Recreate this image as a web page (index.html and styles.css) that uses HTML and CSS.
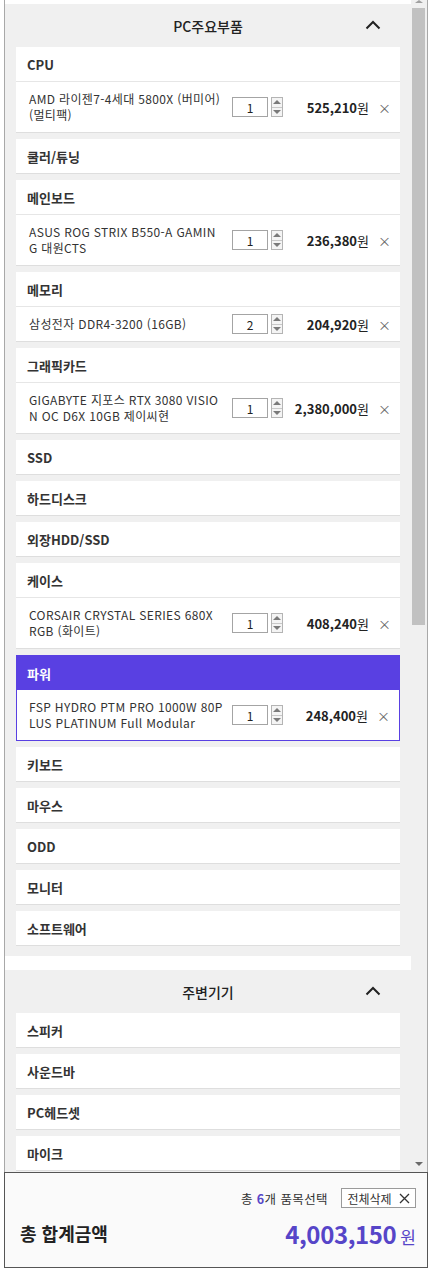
FILE: index.html
```html
<!DOCTYPE html>
<html lang="ko">
<head>
<meta charset="utf-8">
<title>견적 목록</title>
<link rel="stylesheet" href="styles.css">
</head>
<body>
<div class="widget">
  <div class="viewport">
    <div class="scroll-content">
      <section class="group">
        <div class="group-head">
          <span></span>
          <span class="group-title">PC주요부품</span>
          <svg class="chev" width="16" height="10" viewBox="0 0 16 10"><polyline points="1.5,8.5 8,2 14.5,8.5" fill="none" stroke="#222" stroke-width="2"/></svg>
        </div>
        <div class="cards">
          <div class="card">
            <div class="card-head">CPU</div>
            <div class="item">
              <div class="item-name">AMD 라이젠7-4세대 5800X (버미어) (멀티팩)</div>
              <div class="qty"><input class="qty-input" value="1" readonly><span class="spin"><span class="spin-up"></span><span class="spin-down"></span></span></div>
              <div class="price"><b>525,210</b>원</div>
              <div class="remove">×</div>
            </div>
          </div>
          <div class="card"><div class="card-head">쿨러/튜닝</div></div>
          <div class="card">
            <div class="card-head">메인보드</div>
            <div class="item">
              <div class="item-name">ASUS ROG STRIX B550-A GAMING 대원CTS</div>
              <div class="qty"><input class="qty-input" value="1" readonly><span class="spin"><span class="spin-up"></span><span class="spin-down"></span></span></div>
              <div class="price"><b>236,380</b>원</div>
              <div class="remove">×</div>
            </div>
          </div>
          <div class="card">
            <div class="card-head">메모리</div>
            <div class="item">
              <div class="item-name">삼성전자 DDR4-3200 (16GB)</div>
              <div class="qty"><input class="qty-input" value="2" readonly><span class="spin"><span class="spin-up"></span><span class="spin-down"></span></span></div>
              <div class="price"><b>204,920</b>원</div>
              <div class="remove">×</div>
            </div>
          </div>
          <div class="card">
            <div class="card-head">그래픽카드</div>
            <div class="item">
              <div class="item-name">GIGABYTE 지포스 RTX 3080 VISION OC D6X 10GB 제이씨현</div>
              <div class="qty"><input class="qty-input" value="1" readonly><span class="spin"><span class="spin-up"></span><span class="spin-down"></span></span></div>
              <div class="price"><b>2,380,000</b>원</div>
              <div class="remove">×</div>
            </div>
          </div>
          <div class="card"><div class="card-head">SSD</div></div>
          <div class="card"><div class="card-head">하드디스크</div></div>
          <div class="card"><div class="card-head">외장HDD/SSD</div></div>
          <div class="card">
            <div class="card-head">케이스</div>
            <div class="item">
              <div class="item-name">CORSAIR CRYSTAL SERIES 680X RGB (화이트)</div>
              <div class="qty"><input class="qty-input" value="1" readonly><span class="spin"><span class="spin-up"></span><span class="spin-down"></span></span></div>
              <div class="price"><b>408,240</b>원</div>
              <div class="remove">×</div>
            </div>
          </div>
          <div class="card active">
            <div class="card-head">파워</div>
            <div class="item">
              <div class="item-name">FSP HYDRO PTM PRO 1000W 80PLUS PLATINUM Full Modular</div>
              <div class="qty"><input class="qty-input" value="1" readonly><span class="spin"><span class="spin-up"></span><span class="spin-down"></span></span></div>
              <div class="price"><b>248,400</b>원</div>
              <div class="remove">×</div>
            </div>
          </div>
          <div class="card"><div class="card-head">키보드</div></div>
          <div class="card"><div class="card-head">마우스</div></div>
          <div class="card"><div class="card-head">ODD</div></div>
          <div class="card"><div class="card-head">모니터</div></div>
          <div class="card"><div class="card-head">소프트웨어</div></div>
        </div>
      </section>
      <section class="group">
        <div class="group-head">
          <span></span>
          <span class="group-title">주변기기</span>
          <svg class="chev" width="16" height="10" viewBox="0 0 16 10"><polyline points="1.5,8.5 8,2 14.5,8.5" fill="none" stroke="#222" stroke-width="2"/></svg>
        </div>
        <div class="cards">
          <div class="card"><div class="card-head">스피커</div></div>
          <div class="card"><div class="card-head">사운드바</div></div>
          <div class="card"><div class="card-head">PC헤드셋</div></div>
          <div class="card"><div class="card-head">마이크</div></div>
        </div>
      </section>
    </div>
    <div class="scrollbar">
      <div class="sb-up"><span class="sb-arrow-up"></span></div>
      <div class="sb-thumb"></div>
      <div class="sb-track"></div>
      <div class="sb-down"><span class="sb-arrow-down"></span></div>
    </div>
  </div>
  <div class="summary">
    <div class="summary-top">
      <span class="count">총 <b>6</b>개 품목선택</span>
      <button class="clear-btn">전체삭제<svg width="11" height="11" viewBox="0 0 11 11"><path d="M1 1L10 10M10 1L1 10" stroke="#333" stroke-width="1.3" fill="none"/></svg></button>
    </div>
    <div class="summary-total">
      <span class="total-label">총 합계금액</span>
      <span class="total-amount"><b>4,003,150</b><span class="won">원</span></span>
    </div>
  </div>
</div>
</body>
</html>
```
FILE: styles.css
```css
* { box-sizing: border-box; }
body {
  margin: 0;
  background: #fff;
  font-family: "Noto Sans CJK KR", "Noto Sans", sans-serif;
  color: #333;
}
.widget {
  margin-left: 4px;
  width: 424px;
}
.viewport {
  display: flex;
  height: 1172px;
  overflow: hidden;
  border-left: 1px solid #a8a8a8;
  border-right: 1px solid #a8a8a8;
}
.scroll-content {
  width: 406px;
  flex: none;
  padding-top: 4px;
  background: #fff;
}
.group {
  background: #f0f0f0;
  padding: 0 11px 10px;
}
.group + .group { margin-top: 14px; }
.group-head {
  height: 43px;
  display: grid;
  grid-template-columns: 1fr auto 1fr;
  align-items: center;
}
.group-title {
  font-size: 14px;
  font-weight: 500;
  color: #222;
  line-height: 20px;
}
.chev {
  justify-self: end;
  margin-right: 19px;
  margin-top: -2px;
}
.cards {
  display: flex;
  flex-direction: column;
  gap: 6px;
}
.card {
  background: #fff;
  border-bottom: 1px solid #dedede;
}
.card-head {
  height: 34px;
  padding-left: 11px;
  display: flex;
  align-items: center;
  font-size: 13px;
  font-weight: 700;
  color: #333;
}
.card-head + .item { border-top: 1px solid #e6e6e6; }
.card.active { border: 1px solid #5940e2; }
.card.active .card-head {
  background: #5940e2;
  color: #fff;
  padding-left: 10px;
}
.card.active .card-head + .item { border-top: 0; }
.card.active .item { padding-left: 12px; }
.item {
  display: flex;
  align-items: center;
  padding-left: 13px;
}
.item-name {
  width: 195px;
  flex: none;
  padding: 9px 0;
  font-size: 12px;
  line-height: 16px;
  letter-spacing: 0.35px;
  word-break: break-all;
  color: #333;
}
.qty {
  margin-left: 8px;
  display: flex;
  gap: 3px;
}
.qty-input {
  width: 36px;
  height: 20px;
  border: 1px solid #a4a4a4;
  padding: 0;
  margin: 0;
  font-family: "Noto Sans CJK KR", "Noto Sans", sans-serif;
  font-size: 12px;
  color: #222;
  text-align: center;
  background: #fff;
  outline: none;
}
.spin {
  width: 12px;
  height: 20px;
  border: 1px solid #b4b4b4;
  display: flex;
  flex-direction: column;
  background: #f4f4f4;
}
.spin-up, .spin-down {
  flex: 1;
  display: flex;
  align-items: center;
  justify-content: center;
}
.spin-up { border-bottom: 1px solid #c8c8c8; }
.spin-up::before {
  content: "";
  border-left: 4px solid transparent;
  border-right: 4px solid transparent;
  border-bottom: 4px solid #7a7a7a;
}
.spin-down::before {
  content: "";
  border-left: 4px solid transparent;
  border-right: 4px solid transparent;
  border-top: 4px solid #7a7a7a;
}
.price {
  flex: 1;
  text-align: right;
  font-size: 13px;
  color: #222;
  white-space: nowrap;
}
.price b { font-weight: 700; }
.remove {
  width: 31px;
  flex: none;
  text-align: center;
  font-size: 13px;
  color: #666;
}
.scrollbar {
  width: 16px;
  flex: none;
  background: #f0f0f0;
  display: flex;
  flex-direction: column;
}
.sb-up {
  height: 8px;
  display: flex;
  justify-content: center;
}
.sb-arrow-up {
  width: 0;
  height: 0;
  border-left: 4px solid transparent;
  border-right: 4px solid transparent;
  border-bottom: 3px solid #a0a0a0;
}
.sb-thumb {
  height: 617px;
  margin: 0 2px 0 1px;
  background: #c1c1c1;
}
.sb-track { flex: 1; }
.sb-down {
  height: 16px;
  display: flex;
  justify-content: center;
  align-items: center;
}
.sb-arrow-down {
  width: 0;
  height: 0;
  border-left: 4px solid transparent;
  border-right: 4px solid transparent;
  border-top: 4px solid #6a6a6a;
}
.summary {
  height: 96px;
  border: 1px solid #555;
  background: #fafafa;
  padding: 15px 11px 0 15px;
}
.summary-top {
  display: flex;
  justify-content: flex-end;
  align-items: center;
  gap: 13px;
  height: 20px;
}
.count {
  font-size: 12.5px;
  letter-spacing: 0.4px;
  color: #333;
}
.count b { color: #5645c8; font-weight: 700; }
.clear-btn {
  width: 75px;
  height: 20px;
  border: 1px solid #9a9a9a;
  background: #fff;
  padding: 0;
  display: flex;
  align-items: center;
  justify-content: center;
  gap: 7px;
  font-family: "Noto Sans CJK KR", "Noto Sans", sans-serif;
  font-size: 12px;
  color: #333;
}
.summary-total {
  margin-top: 10px;
  height: 30px;
  display: flex;
  align-items: center;
  justify-content: space-between;
}
.total-label {
  font-size: 18px;
  font-weight: 700;
  color: #222;
}
.total-amount {
  color: #5645c8;
  display: flex;
  align-items: baseline;
  gap: 4px;
}
.total-amount b {
  font-size: 24px;
  letter-spacing: -0.4px;
  font-weight: 700;
}
.won { font-size: 17px; }
```
